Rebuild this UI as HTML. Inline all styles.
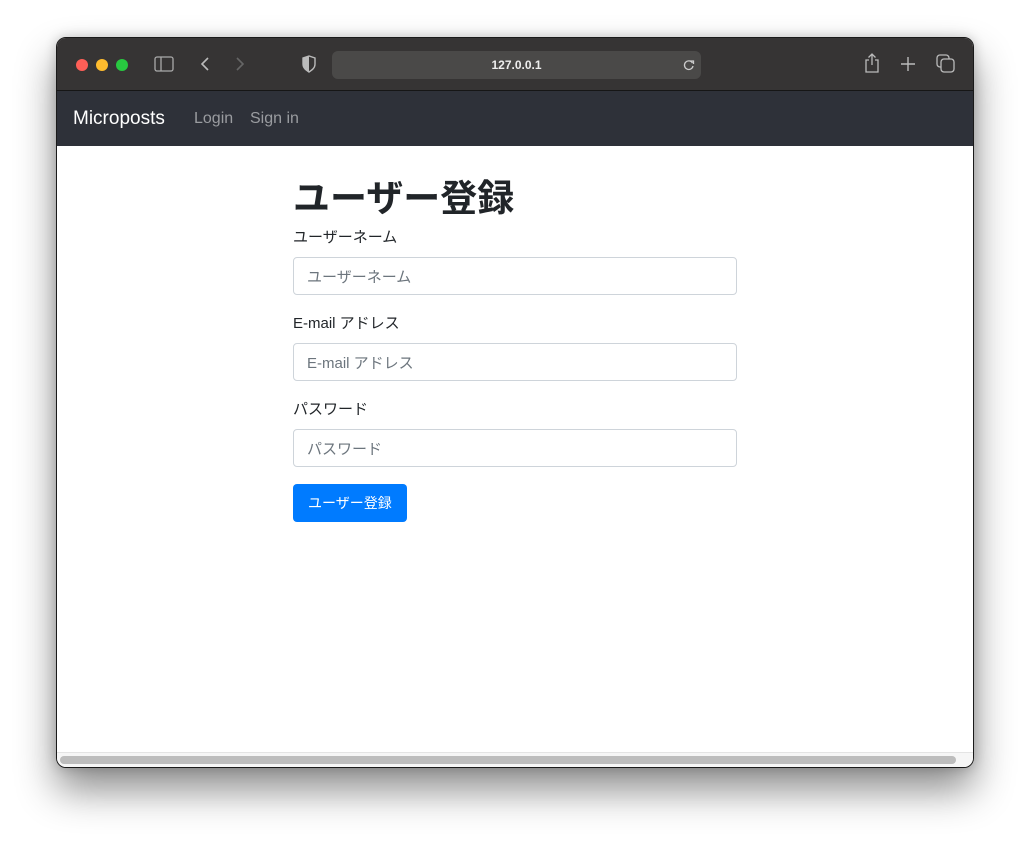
<!DOCTYPE html>
<html><head><meta charset="utf-8"><style>
*{box-sizing:border-box;margin:0;padding:0}
body{width:1030px;height:842px;background:#fff;position:relative;overflow:hidden;font-family:"Liberation Sans","Noto Sans CJK JP",sans-serif}
.win{position:absolute;left:56px;top:37px;width:918px;height:731px;border-radius:10px;overflow:hidden;background:#fff;border:1px solid #1a1a1a;box-shadow:0 22px 40px rgba(0,0,0,.45),0 0 12px rgba(0,0,0,.2)}
.tb{position:absolute;left:0;top:0;width:100%;height:53px;background:#363434;border-bottom:1px solid #161616}
.dot{position:absolute;top:21px;width:12px;height:12px;border-radius:50%}
.url{position:absolute;left:275px;top:13px;width:369px;height:28px;background:#4a4948;border-radius:6px;color:#eee;font-size:12px;font-weight:bold;text-align:center;line-height:28px}
.nav{position:absolute;left:0;top:53px;width:100%;height:55px;background:#2e3139}
.brand{position:absolute;left:16px;top:17px;color:#fff;font-size:19px}
.nl{position:absolute;top:19px;color:#9a9ca0;font-size:16px}
.c{position:absolute;left:236px;top:108px;width:444px;color:#212529}
h1{font-size:37px;font-weight:bold;margin-top:27px;line-height:44px;font-family:"Noto Sans CJK JP",sans-serif}
label{display:block;font-size:15px;margin-top:10px;height:20px;line-height:22px}
.in{height:38px;border:1px solid #ced4da;border-radius:4px;margin-top:10px;padding-left:13px;padding-top:2px;line-height:36px;font-size:15px;color:#6c757d;margin-bottom:18px}
.btn{display:inline-block;background:#007bff;color:#fff;font-size:14px;padding:0 15px;height:38px;line-height:38px;border-radius:4px;margin-top:-1px}
.sb{position:absolute;left:0;bottom:0;width:100%;height:15px;background:#f6f6f6;border-top:1px solid #e4e4e4}
.sb div{position:absolute;left:3px;top:3px;right:17px;height:8px;background:#bdbdbd;border-radius:4px}
</style></head><body>
<div class="win">
<div class="tb">
<div class="dot" style="left:19px;background:#fe5f57"></div>
<div class="dot" style="left:39px;background:#febc2e"></div>
<div class="dot" style="left:59px;background:#28c840"></div>
<svg style="position:absolute;left:97px;top:18px" width="20" height="16"><rect x="1" y="1" width="18" height="14" rx="2" fill="none" stroke="#aaa" stroke-width="1.3"/><line x1="7" y1="1" x2="7" y2="15" stroke="#aaa" stroke-width="1.3"/></svg>
<svg style="position:absolute;left:142px;top:18px" width="12" height="16"><path d="M9 2L3 8l6 6" fill="none" stroke="#bbb" stroke-width="1.6"/></svg>
<svg style="position:absolute;left:177px;top:18px" width="12" height="16"><path d="M3 2l6 6-6 6" fill="none" stroke="#666" stroke-width="1.6"/></svg>
<svg style="position:absolute;left:244px;top:17px" width="16" height="18"><path d="M8 1L2 3v6c0 4 3 6 6 8 3-2 6-4 6-8V3z" fill="none" stroke="#bbb" stroke-width="1.4"/><path d="M8 1v16c-3-2-6-4-6-8V3z" fill="#bbb"/></svg>
<div class="url">127.0.0.1<svg style="position:absolute;right:6px;top:8px" width="12" height="12"><path d="M9.5 4A4.3 4.3 0 1 0 10 7" fill="none" stroke="#ccc" stroke-width="1.3"/><path d="M7 2h3.5v3" fill="none" stroke="#ccc" stroke-width="1.3"/></svg></div>
<svg style="position:absolute;left:806px;top:14px" width="18" height="22"><path d="M6 8H3v12h12V8h-3M9 2v11M5.5 5.5L9 2l3.5 3.5" fill="none" stroke="#bbb" stroke-width="1.3"/></svg>
<svg style="position:absolute;left:843px;top:18px" width="16" height="16"><path d="M8 1v14M1 8h14" stroke="#bbb" stroke-width="1.4"/></svg>
<svg style="position:absolute;left:879px;top:16px" width="20" height="20"><rect x="1" y="1" width="12" height="12" rx="3" fill="none" stroke="#bbb" stroke-width="1.3"/><rect x="5" y="5" width="13" height="13" rx="3" fill="#363434" stroke="#bbb" stroke-width="1.3"/></svg>
</div>
<div class="nav"><div class="brand">Microposts</div><div class="nl" style="left:137px">Login</div><div class="nl" style="left:193px">Sign in</div></div>
<div class="c">
<h1>ユーザー登録</h1>
<label>ユーザーネーム</label><div class="in">ユーザーネーム</div>
<label>E-mail アドレス</label><div class="in">E-mail アドレス</div>
<label>パスワード</label><div class="in">パスワード</div>
<div class="btn">ユーザー登録</div>
</div>
<div class="sb"><div></div></div>
</div>
</body></html>
